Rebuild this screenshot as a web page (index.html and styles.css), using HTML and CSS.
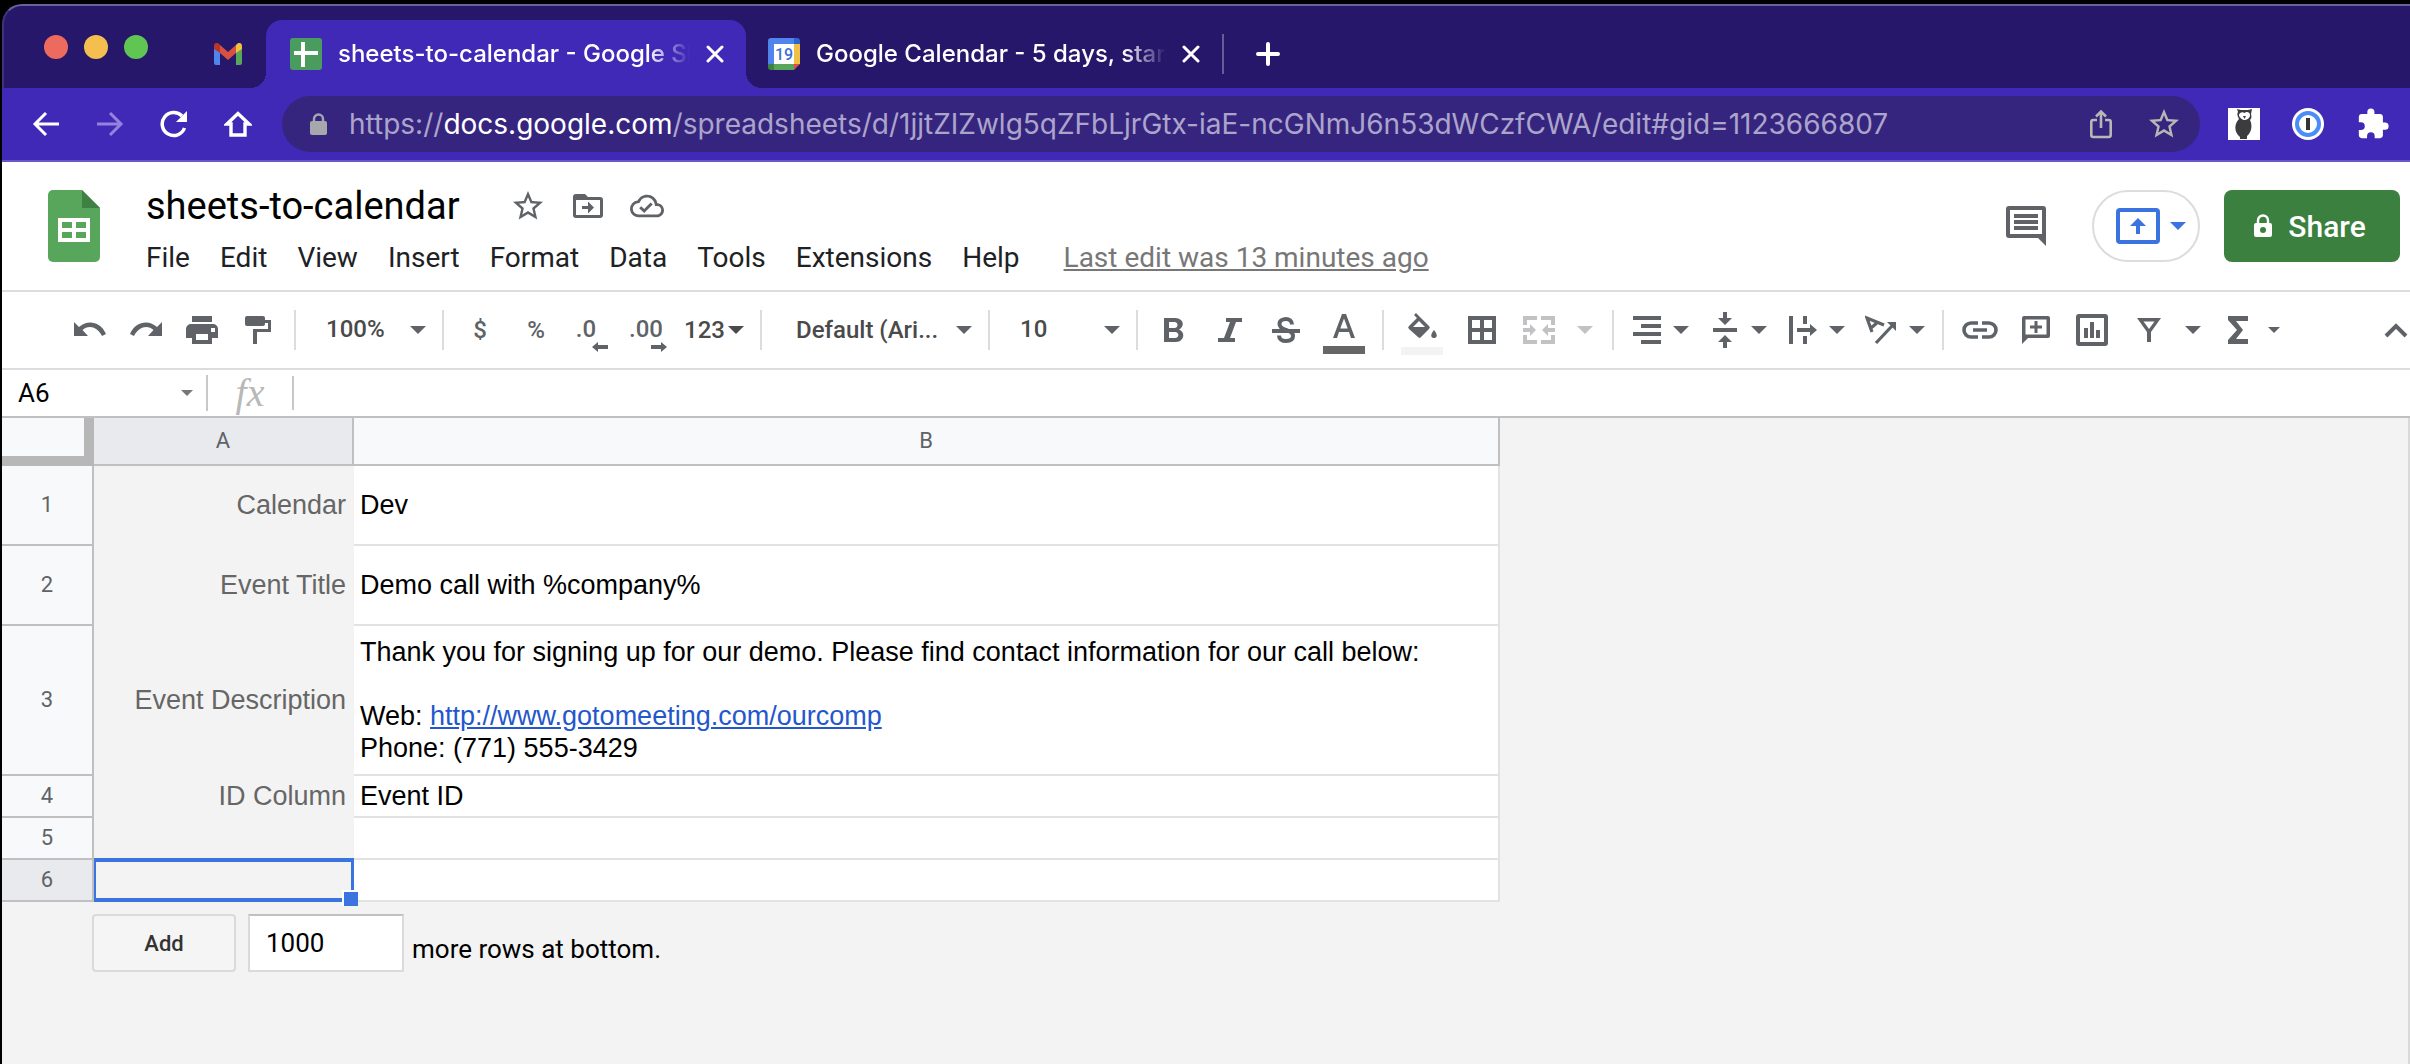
FILE: index.html
```html
<!DOCTYPE html>
<html lang="en">
<head>
<meta charset="utf-8">
<title>sheets-to-calendar - Google Sheets</title>
<link rel="stylesheet" href="styles.css">
</head>
<body>
<svg class="defs" width="0" height="0" aria-hidden="true">
  <symbol id="caret" viewBox="0 0 16 8"><path d="M0 0h16L8 8z"/></symbol>
  <symbol id="star" viewBox="0 0 24 24"><path d="M22 9.24l-7.19-.62L12 2 9.19 8.63 2 9.24l5.46 4.73L5.82 21 12 17.27 18.18 21l-1.63-7.03L22 9.24zM12 15.4l-3.76 2.27 1-4.28-3.32-2.88 4.38-.38L12 6.1l1.71 4.04 4.38.38-3.32 2.88 1 4.28L12 15.4z"/></symbol>
  <symbol id="close" viewBox="0 0 18 18"><path d="M2 2l14 14M16 2L2 16" fill="none" stroke="currentColor" stroke-width="3" stroke-linecap="round"/></symbol>
</svg>
<div class="window">
  <header class="tabs">
    <div class="lights"><i class="red"></i><i class="amber"></i><i class="green"></i></div>
    <a class="pinned" href="#" aria-label="Gmail">
      <svg width="28" height="22" viewBox="0 0 28 22"><path fill="#4f86ec" d="M0 4l6 5v13H2a2 2 0 0 1-2-2z"/><path fill="#58a55c" d="M28 4l-6 5v13h4a2 2 0 0 0 2-2z"/><path fill="#d85140" d="M6 2l8 7 8-7v8l-8 7-8-7z"/><path fill="#b8362b" d="M0 3c0-3 3-4 5-2l1 1v8L0 6z"/><path fill="#f1bf42" d="M28 3c0-3-3-4-5-2l-1 1v8l6-4z"/></svg>
    </a>
    <div class="tab active">
      <svg width="32" height="32" viewBox="0 0 32 32"><rect width="32" height="32" rx="3" fill="#4a9b5e"/><path d="M11 4h4v9h13v4H15v12h-4V17H4v-4h7z" fill="#fff"/></svg>
      <span class="tab-title">sheets-to-calendar - Google Sheets</span>
      <button class="plain" aria-label="Close tab"><svg width="18" height="18"><use href="#close"/></svg></button>
    </div>
    <div class="tab second">
      <svg width="32" height="32" viewBox="0 0 32 32"><path fill="#5085ed" d="M0 3a3 3 0 0 1 3-3h23v6H6v20H0z"/><path fill="#2f66cf" d="M26 0h3a3 3 0 0 1 3 3v3h-6z"/><path fill="#f1bf42" d="M26 6h6v20h-6z"/><path fill="#58a55c" d="M6 26h20v6H6z"/><path fill="#3f8142" d="M0 26h6v6H3a3 3 0 0 1-3-3z"/><path fill="#d85140" d="M26 26h6l-6 6z"/><path fill="#fff" d="M6 6h20v20H6z"/><text x="16" y="22" text-anchor="middle" font-family="Roboto, sans-serif" font-size="16" font-weight="500" fill="#3b71d6">19</text></svg>
      <span class="tab-title">Google Calendar - 5 days, starting</span>
      <button class="plain" aria-label="Close tab"><svg width="18" height="18"><use href="#close"/></svg></button>
    </div>
    <button class="plain new-tab" aria-label="New tab"><svg width="24" height="24" viewBox="0 0 24 24"><path d="M12 2v20M2 12h20" stroke="#fff" stroke-width="4" stroke-linecap="round"/></svg></button>
  </header>

  <nav class="browser-bar">
    <button class="nav plain" aria-label="Back"><svg width="28" height="28" viewBox="0 0 28 28" fill="none" stroke="#fff" stroke-width="3"><path d="M27 14H3M14 3L3 14l11 11"/></svg></button>
    <button class="nav plain" aria-label="Forward"><svg width="28" height="28" viewBox="0 0 28 28" fill="none" stroke="#9482dc" stroke-width="3"><path d="M1 14h24M14 3l11 11-11 11"/></svg></button>
    <button class="nav plain" aria-label="Reload"><svg width="28" height="28" viewBox="0 0 28 28"><path d="M24.500 18A11.500 11.500 0 1 1 22 6" fill="none" stroke="#fff" stroke-width="3.500"/><path d="M27 1v11H16z" fill="#fff"/></svg></button>
    <button class="nav plain" aria-label="Home"><svg width="28" height="28" viewBox="0 0 28 28"><path d="M14 3.500L3 14h4v11h14V14h4z" fill="none" stroke="#fff" stroke-width="3.400"/></svg></button>
    <div class="omnibox">
      <svg width="17" height="22" viewBox="0 0 17 22"><path d="M4 9V6a4.500 4.500 0 0 1 9 0v3" fill="none" stroke="#a6a6b0" stroke-width="2.400"/><rect y="8" width="17" height="14" rx="2" fill="#a6a8ac"/></svg>
      <span class="url">https://<b>docs.google.com</b>/spreadsheets/d/1jjtZIZwlg5qZFbLjrGtx-iaE-ncGNmJ6n53dWCzfCWA/edit#gid=1123666807</span>
      <button class="plain" aria-label="Share this page"><svg width="22" height="30" viewBox="0 0 22 30" fill="none" stroke="#b9b7b4" stroke-width="2.600"><path d="M7 11H3.300a2 2 0 0 0-2 2v13a2 2 0 0 0 2 2h15.400a2 2 0 0 0 2-2V13a2 2 0 0 0-2-2H15M11 19V3M6 7.500l5-5 5 5"/></svg></button>
      <button class="plain" aria-label="Bookmark this tab"><svg class="bookmark" width="36" height="36"><use href="#star"/></svg></button>
    </div>
    <button class="plain ext" aria-label="Owl extension"><svg width="32" height="32" viewBox="0 0 32 32"><path fill="#fff" d="M0 0h32v32H0z"/><path fill="#3c3c3e" d="M9 1l4 1h7l4-1-1 5c1 4 0 5-1 6 3 6 1 13-3 16v3h-7v-2c-6-5-6-13-1-18-2-3-2-6-1-7z"/><path fill="#fff" d="M16.500 5c2-2 6-1 5.500 2.500S18 12 16.500 12 11.500 10 11 7.500 14.500 3 16.500 5z"/><path fill="#3c3c3e" d="M15 8h3l-1.500 3z"/><circle cx="14" cy="7" r="1.200"/><circle cx="19" cy="7" r="1.200"/></svg></button>
    <button class="plain ext" aria-label="Password manager"><svg width="32" height="32" viewBox="0 0 32 32"><circle cx="16" cy="16" r="16" fill="#fff"/><circle cx="16" cy="16" r="11" fill="#fff" stroke="#4a8df6" stroke-width="4"/><rect x="14" y="10" width="4" height="12" fill="#333"/></svg></button>
    <button class="plain ext" aria-label="Extensions"><svg width="34" height="34" viewBox="0 0 24 24"><path fill="#fff" d="M20.500 11H19V7c0-1.100-.9-2-2-2h-4V3.500a2.500 2.500 0 0 0-5 0V5H4c-1.100 0-2 .9-2 2v3.800h1.500a2.700 2.700 0 0 1 0 5.400H2V20c0 1.100.9 2 2 2h3.800v-1.500a2.700 2.700 0 0 1 5.400 0V22H17c1.100 0 2-.9 2-2v-4h1.500a2.500 2.500 0 0 0 0-5z"/></svg></button>
  </nav>

  <section class="doc-head">
    <svg width="52" height="72" viewBox="0 0 52 72"><path fill="#58a55c" d="M5 0h29l18 18v49a5 5 0 0 1-5 5H5a5 5 0 0 1-5-5V5a5 5 0 0 1 5-5z"/><path fill="#3f8142" d="M34 0l18 18H34z"/><path fill="#fff" fill-rule="evenodd" d="M10 28h32v24H10zM14 32v6h10v-6zM28 32v6h10v-6zM14 42v6h10v-6zM28 42v6h10v-6z"/></svg>
    <div class="doc-info">
      <div class="title-row">
        <h1>sheets-to-calendar</h1>
        <button class="plain" aria-label="Star"><svg width="36" height="36"><use href="#star"/></svg></button>
        <button class="plain" aria-label="Move"><svg width="36" height="36" viewBox="0 0 24 24"><path d="M20 6h-8l-2-2H4a2 2 0 0 0-2 2v12a2 2 0 0 0 2 2h16a2 2 0 0 0 2-2V8a2 2 0 0 0-2-2zm0 12H4V8h16v10zm-8-1l4-4-4-4v3H8v2h4z"/></svg></button>
        <button class="plain" aria-label="Document status"><svg width="34" height="36" viewBox="0 0 24 24"><path d="M19.350 10.040A7.490 7.490 0 0 0 12 4C9.110 4 6.600 5.640 5.350 8.040A5.994 5.994 0 0 0 0 14c0 3.310 2.690 6 6 6h13c2.760 0 5-2.240 5-5 0-2.640-2.050-4.780-4.650-4.960zM19 18H6c-2.210 0-4-1.790-4-4 0-2.050 1.530-3.760 3.560-3.970l1.070-.11.5-.95A5.469 5.469 0 0 1 12 6c2.620 0 4.880 1.860 5.390 4.430l.3 1.500 1.530.11A2.980 2.980 0 0 1 22 15c0 1.650-1.350 3-3 3zm-9-3.820l-2.090-2.090L6.500 13.500 10 17l6.010-6.010-1.410-1.410z"/></svg></button>
      </div>
      <div class="menus">
        <button class="plain">File</button><button class="plain">Edit</button><button class="plain">View</button><button class="plain">Insert</button><button class="plain">Format</button><button class="plain">Data</button><button class="plain">Tools</button><button class="plain">Extensions</button><button class="plain">Help</button>
        <a href="#">Last edit was 13 minutes ago</a>
      </div>
    </div>
    <div class="doc-actions">
      <button class="plain" aria-label="Comments"><svg width="40" height="40" viewBox="0 0 40 40"><path fill-rule="evenodd" d="M3 0h34a3 3 0 0 1 3 3v37l-8-8H3a3 3 0 0 1-3-3V3a3 3 0 0 1 3-3zM4 4v24h32V4z"/><path d="M8 8h24v4H8zM8 14h24v4H8zM8 20h24v4H8z"/></svg></button>
      <button class="present" aria-label="Present to a meeting"><svg width="44" height="36" viewBox="0 0 44 36"><rect x="2" y="2" width="40" height="32" rx="2" fill="none" stroke="#3b73e0" stroke-width="4"/><path d="M22 10l8 8h-6v8h-4v-8h-6z"/></svg><svg width="16" height="8"><use href="#caret"/></svg></button>
      <button class="share"><svg width="18" height="24" viewBox="0 0 18 24"><path fill="none" stroke="#fff" stroke-width="2.400" d="M4 10V6.500a5 5 0 0 1 10 0V10"/><path fill="#fff" fill-rule="evenodd" d="M2 9h14a2 2 0 0 1 2 2v10a2 2 0 0 1-2 2H2a2 2 0 0 1-2-2V11a2 2 0 0 1 2-2zm7 4a3 3 0 1 0 0 6 3 3 0 0 0 0-6z"/></svg>Share</button>
    </div>
  </section>

  <div class="toolbar" role="toolbar" aria-label="Formatting">
    <button class="tool" aria-label="Undo"><svg width="32" height="32" viewBox="0 0 32 32"><path d="M0 8l5 5c7-7 21-7 27 7l-4 2C23 12 14 11 8.500 16L14 22H0z"/></svg></button>
    <button class="tool" aria-label="Redo"><svg width="32" height="32" viewBox="0 0 32 32"><path d="M32 8l-5 5C20 6 6 6 0 20l4 2c5-10 14-11 19.500-6L18 22h14z"/></svg></button>
    <button class="tool" aria-label="Print"><svg width="32" height="28" viewBox="0 0 32 28"><path d="M6 0h20v6H6z"/><path fill-rule="evenodd" d="M5 8h22a5 5 0 0 1 5 5v9h-6v6H6v-6H0v-9a5 5 0 0 1 5-5zm5 10v6h12v-6zm15-6v4h4v-4z"/></svg></button>
    <button class="tool" aria-label="Paint format"><svg width="26" height="28" viewBox="0 0 26 28"><path d="M2 0h16a2 2 0 0 1 2 2v2h6v12H12v12H8V13h15V7h-3v1a2 2 0 0 1-2 2H2a2 2 0 0 1-2-2V2a2 2 0 0 1 2-2z"/></svg></button>
    <span class="sep"></span>
    <label class="picker"><select aria-label="Zoom"><option>100%</option></select><svg width="16" height="8"><use href="#caret"/></svg></label>
    <span class="sep"></span>
    <button class="tool">$</button>
    <button class="tool">%</button>
    <button class="tool decimal one" aria-label="Decrease decimal places"><span>.0</span><svg width="16" height="10" viewBox="0 0 16 10"><path d="M0 5l6-5v3h10v4H6v3z"/></svg></button>
    <button class="tool decimal" aria-label="Increase decimal places"><span>.00</span><svg width="16" height="10" viewBox="0 0 16 10"><path d="M16 5l-6-5v3H0v4h10v3z"/></svg></button>
    <button class="tool formats">123<svg width="16" height="8"><use href="#caret"/></svg></button>
    <span class="sep"></span>
    <label class="picker font"><select aria-label="Font"><option>Default (Ari...</option></select><svg width="16" height="8"><use href="#caret"/></svg></label>
    <span class="sep"></span>
    <label class="picker"><select aria-label="Font size"><option>10</option></select><svg width="16" height="8"><use href="#caret"/></svg></label>
    <span class="sep"></span>
    <button class="tool" aria-label="Bold"><svg width="20" height="24" viewBox="0 0 20 24"><path fill-rule="evenodd" d="M0 0h11c9 0 10 9 4 11.500C22 14 20 24 12 24H0zM5 4v6h5.500c4 0 4-6 0-6zM5 14v6h6c4.500 0 4.500-6 0-6z"/></svg></button>
    <button class="tool" aria-label="Italic"><svg width="24" height="24" viewBox="0 0 24 24"><path d="M8 0h16v4h-6l-6 16h5v4H0v-4h6l6-16H8z"/></svg></button>
    <button class="tool" aria-label="Strikethrough"><svg width="28" height="26" viewBox="0 0 28 26"><path d="M0 12h28v4H0z"/><path d="M20 7.500C20 3.500 17 2 14 2s-6.500 1.500-6.500 5S11 12 14 13s7 2 7 6-3 5-7 5-7-2-7-5.500" fill="none" stroke="currentColor" stroke-width="4"/></svg></button>
    <button class="tool wide swatch text-color" aria-label="Text color"><svg width="22" height="24" viewBox="0 0 22 24"><path fill-rule="evenodd" d="M9 0h4l9 24h-4l-2-6H6l-2 6H0zM11 4.500L7.300 14.500h7.400z"/></svg></button>
    <span class="sep"></span>
    <button class="tool wide swatch fill-color" aria-label="Fill color"><svg width="30" height="26" viewBox="0 0 30 26"><path fill-rule="evenodd" d="M9 0l13 13a2 2 0 0 1 0 3l-8 8a2 2 0 0 1-3 0l-9-8a2 2 0 0 1 0-3l8-8-3-3zm3 8l-6 6h12z"/><path d="M27 17c5 6 2 8 0 8s-5-2 0-8z"/></svg></button>
    <button class="tool wide" aria-label="Borders"><svg width="28" height="28" viewBox="0 0 28 28"><path fill-rule="evenodd" d="M0 0h28v28H0zM4 4v8h8V4zm12 0v8h8V4zM4 16v8h8v-8zm12 0v8h8v-8z"/></svg></button>
    <button class="tool merge" disabled aria-label="Merge cells"><svg width="32" height="28" viewBox="0 0 32 28"><path d="M0 0h14v4H4v5H0zM18 0h14v9h-4V4H18zM0 19h4v5h10v4H0zM28 19h4v9H18v-4h10zM0 12h7V8l6 6-6 6v-4H0zM32 12h-7V8l-6 6 6 6v-4h7z"/></svg><svg width="16" height="8"><use href="#caret"/></svg></button>
    <span class="sep"></span>
    <button class="tool drop" aria-label="Horizontal align"><svg width="28" height="28" viewBox="0 0 28 28"><path d="M0 0h28v4H0zM8 8h20v4H8zM0 16h28v4H0zM8 24h20v4H8z"/></svg><svg width="16" height="8"><use href="#caret"/></svg></button>
    <button class="tool drop" aria-label="Vertical align"><svg width="28" height="36" viewBox="0 0 28 36"><path d="M2 16h24v4H2zM12 0h4v6h5l-7 7-7-7h5zM12 36h4v-6h5l-7-7-7 7h5z"/></svg><svg width="16" height="8"><use href="#caret"/></svg></button>
    <button class="tool drop" aria-label="Text wrapping"><svg width="28" height="28" viewBox="0 0 28 28"><path d="M0 0h4v28H0zM14 0h4v8h-4zM14 20h4v8h-4zM8 12h13V8l7 6-7 6v-4H8z"/></svg><svg width="16" height="8"><use href="#caret"/></svg></button>
    <button class="tool drop" aria-label="Text rotation"><svg width="32" height="30" viewBox="0 0 32 30"><path fill="none" stroke="currentColor" stroke-width="3.200" d="M7 17L2 3l17 7M6 13l7-6M11 28L27 11"/><path d="M22 7h9v9z"/></svg><svg width="16" height="8"><use href="#caret"/></svg></button>
    <span class="sep"></span>
    <button class="tool" aria-label="Insert link"><svg width="36" height="18" viewBox="0 0 36 18"><path fill="none" stroke="currentColor" stroke-width="3.600" d="M16 2H9a7 7 0 0 0 0 14h7M20 2h7a7 7 0 0 1 0 14h-7M11 9h14"/></svg></button>
    <button class="tool" aria-label="Insert comment"><svg width="28" height="28" viewBox="0 0 28 28"><path fill-rule="evenodd" d="M2 0h24a2 2 0 0 1 2 2v18a2 2 0 0 1-2 2H6l-6 6V2a2 2 0 0 1 2-2zM3.500 3.500v15h21v-15z"/><path d="M12.500 5h3v4.500H20v3h-4.500V17h-3v-4.500H8v-3h4.500z"/></svg></button>
    <button class="tool" aria-label="Insert chart"><svg width="32" height="32" viewBox="0 0 32 32"><path fill-rule="evenodd" d="M3 0h26a3 3 0 0 1 3 3v26a3 3 0 0 1-3 3H3a3 3 0 0 1-3-3V3a3 3 0 0 1 3-3zm1 4v24h24V4z"/><path d="M8 14h4v10H8zM14 8h4v16h-4zM20 16h4v8h-4z"/></svg></button>
    <button class="tool filter" aria-label="Filter"><svg width="24" height="24" viewBox="0 0 24 24"><path fill-rule="evenodd" d="M0 0h24l-10 14v10h-4V14zM6.500 3.500L12 11l5.500-7.500z"/></svg><svg width="16" height="8"><use href="#caret"/></svg></button>
    <button class="tool functions" aria-label="Functions"><svg width="20" height="28" viewBox="0 0 20 28"><path d="M0 0h20v5H8l7 9-7 9h12v5H0v-4l9-10L0 4z"/></svg><svg width="12" height="6"><use href="#caret"/></svg></button>
    <button class="tool collapse" aria-label="Hide the menus"><svg width="24" height="16" viewBox="0 0 24 16"><path d="M2 14L12 4l10 10" fill="none" stroke="currentColor" stroke-width="4"/></svg></button>
  </div>

  <div class="formula">
    <div class="name-box"><input aria-label="Name box" value="A6"><svg width="12" height="6"><use href="#caret"/></svg></div>
    <span class="fx">fx</span>
    <input class="formula-input" aria-label="Formula">
  </div>

  <main class="sheet">
    <table>
      <colgroup><col class="c-num"><col class="c-a"><col class="c-b"></colgroup>
      <thead><tr><th class="corner"></th><th class="current" scope="col">A</th><th scope="col">B</th></tr></thead>
      <tbody>
        <tr class="tall"><th scope="row">1</th><td class="key">Calendar</td><td>Dev</td></tr>
        <tr class="tall"><th scope="row">2</th><td class="key">Event Title</td><td>Demo call with %company%</td></tr>
        <tr class="text"><th scope="row">3</th><td class="key">Event Description</td><td>Thank you for signing up for our demo. Please find contact information for our call below:<br><br>Web: <a href="#">http://www.gotomeeting.com/ourcomp</a><br>Phone: (771) 555-3429</td></tr>
        <tr><th scope="row">4</th><td class="key">ID Column</td><td>Event ID</td></tr>
        <tr><th scope="row">5</th><td class="key"></td><td></td></tr>
        <tr><th class="current" scope="row">6</th><td class="key selected"></td><td></td></tr>
      </tbody>
    </table>
    <form class="add-rows">
      <button type="button">Add</button>
      <input id="rows" value="1000">
      <label for="rows">more rows at bottom.</label>
    </form>
  </main>
</div>
</body>
</html>
```

FILE: styles.css
```css
* { box-sizing: border-box; }
body {
  margin: 0;
  background: #000;
  font-family: Roboto, "Liberation Sans", sans-serif;
  color: #000;
}
button, input, select { font: inherit; color: inherit; }
svg { display: block; flex: none; }
svg:not([fill]) { fill: currentColor; }
.defs { position: absolute; }
.plain { border: 0; padding: 0; background: none; }

.window {
  display: flex;
  flex-direction: column;
  min-height: 100vh;
  padding: 4px 0 0 2px;
}

/* Tab strip */
.tabs {
  display: flex;
  align-items: flex-end;
  height: 84px;
  background: #26176a;
  border-top: 2px solid #6a609b;
  border-left: 2px solid #40337c;
  border-top-left-radius: 20px;
  color: #fff;
  font: 500 24px/32px Inter, sans-serif;
}
.lights { display: flex; gap: 16px; padding: 0 0 29px 40px; }
.lights i { width: 24px; height: 24px; border-radius: 50%; }
.red { background: #ed6a5e; }
.amber { background: #f4bf4f; }
.green { background: #61c554; }
.pinned { padding: 0 24px 23px 66px; }
.tab {
  position: relative;
  display: flex;
  align-items: center;
  gap: 16px;
  width: 480px;
  height: 68px;
  padding: 0 22px 0 24px;
}
.tab.second { width: 476px; padding-left: 22px; }
.tab.active { background: #4129b7; border-radius: 16px 16px 0 0; }
.tab.active::before, .tab.active::after {
  content: "";
  position: absolute;
  bottom: 0;
  width: 16px;
  height: 16px;
}
.tab.active::before { right: 100%; background: radial-gradient(circle at 0 0, #26176a 16px, #4129b7 16px); }
.tab.active::after { left: 100%; background: radial-gradient(circle at 100% 0, #26176a 16px, #4129b7 16px); }
.tab-title {
  flex: 1;
  overflow: hidden;
  white-space: nowrap;
  -webkit-mask-image: linear-gradient(to right, #000 88%, transparent);
  mask-image: linear-gradient(to right, #000 88%, transparent);
}
.new-tab { padding: 8px 32px; margin-bottom: 14px; border-left: 2px solid #675c96; }

/* Address bar */
.browser-bar {
  display: flex;
  align-items: center;
  gap: 36px;
  height: 74px;
  padding: 0 20px 0 30px;
  background: #4129b7;
  border-bottom: 2px solid #6b56c5;
  color: #fff;
}
.omnibox {
  flex: 1;
  display: flex;
  align-items: center;
  gap: 34px;
  min-width: 0;
  height: 56px;
  margin-left: -6px;
  padding: 0 18px 0 28px;
  border-radius: 28px;
  background: #36257f;
}
.url {
  flex: 1;
  overflow: hidden;
  margin-left: -12px;
  white-space: nowrap;
  font: 400 28px/36px Inter, sans-serif;
  color: #aca5cb;
}
.url b { font-weight: 400; color: #fff; }
.omnibox .bookmark { color: #b9b7b4; }
.ext { margin-left: -4px; }
.omnibox + .ext { margin-left: -8px; }

/* Document header */
.doc-head {
  display: flex;
  align-items: center;
  gap: 46px;
  height: 130px;
  padding: 0 10px 0 46px;
  background: #fff;
  border-bottom: 2px solid #dadce0;
  color: #5f6368;
}
.doc-info { padding-top: 8px; }
.title-row { display: flex; align-items: center; gap: 24px; height: 44px; }
h1 { margin: 0 26px 0 0; font: 400 38px/44px Roboto, sans-serif; color: #000; }
.menus { display: flex; gap: 30px; margin-top: 12px; font-size: 28px; line-height: 36px; color: #202124; }
.menus a { margin-left: 14px; color: #777; }
.doc-actions { display: flex; align-items: center; gap: 24px; margin-left: auto; }
.doc-actions > .plain { margin-right: 22px; }
.present {
  display: flex;
  align-items: center;
  gap: 10px;
  width: 108px;
  height: 72px;
  padding: 0 0 0 22px;
  border: 2px solid #dadce0;
  border-radius: 36px;
  background: #fff;
  color: #3b73e0;
}
.share {
  display: flex;
  align-items: center;
  justify-content: center;
  gap: 16px;
  width: 176px;
  height: 72px;
  padding: 0 10px 0 6px;
  border: 0;
  border-radius: 8px;
  background: #3c8040;
  color: #fff;
  font-size: 30px;
  font-weight: 500;
}

/* Formatting toolbar */
.toolbar {
  display: flex;
  align-items: center;
  height: 78px;
  padding: 0 2px 0 60px;
  background: #fff;
  border-bottom: 2px solid #dadce0;
  color: #5f6368;
  font-size: 24px;
  font-weight: 500;
}
.sep { flex: none; width: 2px; height: 40px; margin: 0 8px; background: #dadce0; }
.tool {
  display: flex;
  align-items: center;
  justify-content: center;
  flex: none;
  width: 56px;
  height: 52px;
  padding: 0;
  border: 0;
  background: none;
  color: #5f6368;
}
.tool.wide { width: 60px; }
.picker { display: grid; align-items: center; width: 130px; }
.picker.font { width: 210px; }
.picker select {
  grid-area: 1 / 1;
  width: 100%;
  height: 52px;
  padding: 0 0 2px 22px;
  border: 0;
  background: none;
  appearance: none;
  color: #4a4a4a;
}
.picker.font select { padding: 0 0 0 26px; }
.picker svg { grid-area: 1 / 1; justify-self: end; margin-right: 8px; }
.decimal { display: grid; justify-content: center; justify-items: end; align-content: end; padding-bottom: 4px; line-height: 26px; }
.decimal span { margin-right: 4px; }
.decimal.one span { margin-right: 12px; }
.formats { width: 76px; gap: 3px; color: #4a4a4a; }
.swatch { flex-direction: column; gap: 8px; padding-top: 8px; }
.swatch::after { content: ""; width: 42px; height: 8px; background: #666; }
.fill-color::after { background: #f3f3f3; }
.merge { width: 92px; gap: 22px; color: #c0c2c4; }
.drop { width: 78px; gap: 12px; }
.filter { width: 90px; gap: 24px; margin-left: 4px; }
.functions { width: 80px; gap: 20px; }
.collapse { width: 24px; margin-left: auto; }

/* Formula bar */
.formula {
  display: flex;
  align-items: center;
  height: 48px;
  background: #fff;
  border-bottom: 2px solid #c0c0c0;
}
.name-box {
  display: flex;
  align-items: center;
  width: 206px;
  height: 36px;
  padding: 0 13px 0 16px;
  border-right: 2px solid #c8c8c8;
  color: #777;
}
.name-box input { flex: 1; min-width: 0; padding: 0; border: 0; font-size: 26px; color: #000; }
.fx { width: 84px; text-align: center; font: italic 40px/40px "Liberation Serif", serif; color: #b8b8b8; }
.formula-input { flex: 1; height: 34px; border: 0; border-left: 2px solid #c8c8c8; font-size: 26px; }

/* Grid */
.sheet { flex: 1; background: #f3f3f3; border-right: 2px solid #d9d9d9; }
table { table-layout: fixed; width: 1498px; border-collapse: separate; border-spacing: 0; }
.c-num { width: 92px; }
.c-a { width: 260px; }
th {
  height: 42px;
  padding: 0;
  background: #f8f9fa;
  border: 0 solid #c0c0c0;
  border-width: 0 2px 2px 0;
  font-size: 22px;
  font-weight: 400;
  line-height: 28px;
  color: #5f6368;
}
thead th { height: 48px; }
th.current { background: #e8eaed; }
.corner { border-color: #b7b7b7; border-width: 0 10px 10px 0; }
td {
  position: relative;
  padding: 0 6px;
  background: #fff;
  border: 0 solid #e2e2e2;
  border-width: 0 2px 2px 0;
  font: 27px/32px "Liberation Sans", Arial, sans-serif;
}
td a { color: #2457cc; }
.tall th { height: 80px; }
.text th { height: 150px; }
.key { border-color: #f3f3f3; background: #f3f3f3; color: #666; text-align: right; }
.selected { z-index: 1; }
.selected::before {
  content: "";
  position: absolute;
  inset: -2px -2px -2px 0;
  border: 4px solid #3b73e0;
  border-width: 4px 3px 4px 2px;
}
.selected::after {
  content: "";
  position: absolute;
  right: -6px;
  bottom: -6px;
  width: 14px;
  height: 14px;
  border: solid #fff;
  border-width: 2px 0 0 2px;
  background: #3b73e0;
}

.add-rows { display: flex; align-items: center; gap: 12px; padding: 12px 90px; font-size: 26px; }
.add-rows button {
  width: 144px;
  height: 58px;
  border: 2px solid #dadada;
  border-radius: 4px;
  background: #f5f5f5;
  color: #333;
  font-size: 22px;
  font-weight: 500;
}
.add-rows input {
  width: 156px;
  height: 58px;
  padding: 0 16px;
  border: 2px solid #dadada;
  border-top-color: #c0c0c0;
  background: #fff;
}
.add-rows label { margin: 12px 0 0 -4px; }
```
